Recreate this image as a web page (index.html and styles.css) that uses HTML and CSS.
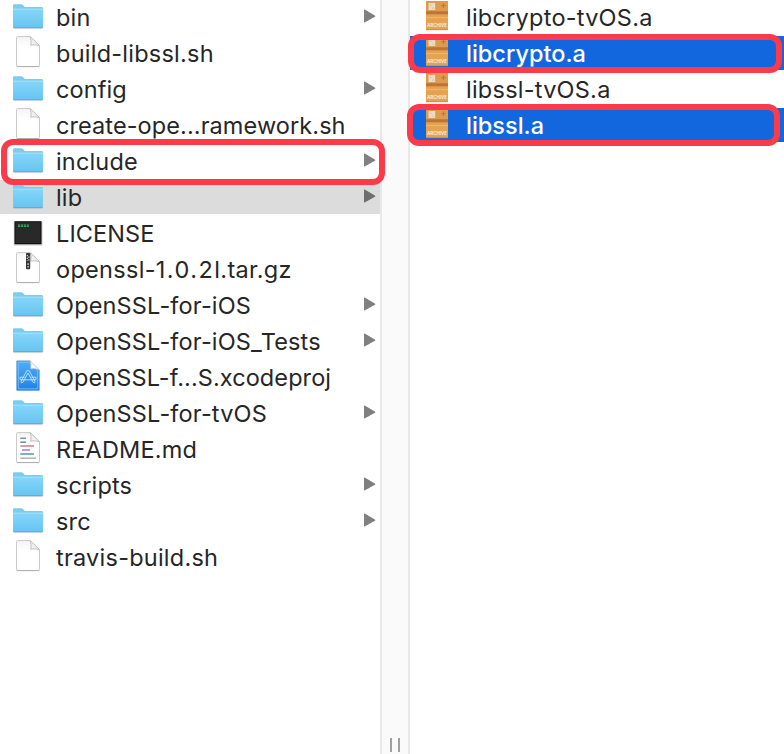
FILE: index.html
```
<!DOCTYPE html>
<html lang="en">
<head>
<meta charset="utf-8">
<title>Files</title>
<link rel="stylesheet" href="styles.css">
</head>
<body>
<svg class="defs" width="0" height="0">
  <defs>
    <linearGradient id="gf" x1="0" y1="0" x2="0" y2="1"><stop offset="0" stop-color="#84d5f9"/><stop offset="1" stop-color="#68c4f2"/></linearGradient>
    <linearGradient id="gx" x1="0" y1="0" x2="0" y2="1"><stop offset="0" stop-color="#50aef5"/><stop offset="1" stop-color="#1f80e8"/></linearGradient>
    <linearGradient id="gp" x1="0" y1="0" x2="0" y2="1"><stop offset="0" stop-color="#f4f4f4"/><stop offset=".35" stop-color="#fff"/></linearGradient>
    <symbol id="folder" viewBox="0 0 32 34">
      <path d="M1.5 28.6h29" stroke="#b9c4ca" stroke-width="1" opacity=".7"/>
      <path d="M1 27V5.5Q1 4.3 2.2 4.3H9.5Q10.4 4.3 11 5L12.8 7H29.8Q31 7 31 8.200V27Q31 28 30 28H2Q1 28 1 27Z" fill="#7bcdf0"/>
      <path d="M1.400 9.400H30.600V27.300H1.400Z" fill="url(#gf)"/>
      <path d="M1 9.200H31" stroke="#a9e3fa" stroke-width="1"/>
      <path d="M1.300 27.600H30.700" stroke="#5aa9cf" stroke-width=".9"/>
    </symbol>
    <symbol id="page" viewBox="0 0 32 34">
      <path d="M4.500 1.500Q4.500.6 5.500.6H18.300L27.500 9.800V29.600Q27.500 30.500 26.500 30.500H5.500Q4.500 30.500 4.500 29.600Z" fill="url(#gp)" stroke="#c4c4c4" stroke-width=".9"/>
      <path d="M4.800 30.600H27.200" stroke="#aaa" stroke-width=".9"/>
      <path d="M18.300.6Q19.600 4.500 18.800 9.200Q23.500 8 27.500 9.800Z" fill="#f1f1f1" stroke="#bbb" stroke-width=".9"/>
      <path d="M19.200 0H28V9Z" fill="#fff"/>
    </symbol>
    <symbol id="exec" viewBox="0 0 32 34">
      <rect x="1.700" y="5.500" width="28.800" height="24" rx="1" fill="#c9c9c9"/>
      <rect x="2.500" y="5.200" width="27" height="23" fill="#0e0e0e"/>
      <rect x="3.500" y="6.200" width="25" height="21" fill="#292929"/>
      <path d="M6 9.800H16.800" stroke="#3fae62" stroke-width="2.400" stroke-dasharray="2.200 .7"/>
      <path d="M6 9.700H16.800" stroke="#292929" stroke-width=".4"/>
    </symbol>
    <symbol id="zip" viewBox="0 0 32 34">
      <use href="#page" width="32" height="34"/>
      <rect x="14" y="1" width="4.200" height="16.200" rx="1" fill="#353535"/>
      <path d="M15.300 3V9M16.900 4.500V10" stroke="#eee" stroke-width="1.100" stroke-dasharray="1.300 1.500"/>
      <path d="M16.100 11.300V15.500" stroke="#ddd" stroke-width="1.300" stroke-dasharray="1.600 1"/>
    </symbol>
    <symbol id="xcode" viewBox="0 0 32 34">
      <path d="M4.800 30.300H27.200V10L18 .9H4.800Z" fill="url(#gx)" stroke="#3b86ca" stroke-width=".7"/>
      <path d="M6.300 28.800H25.700V11L17.500 2.300H6.300Z" fill="none" stroke="#8dcaff" stroke-width=".7"/>
      <path d="M18 .6Q19.500 4 18.600 8.800Q23 8 27.500 10Z" fill="#f7f7f7" stroke="#bbb" stroke-width=".5"/>
      <path d="M14.800 10.800H17.200L23 21.500L22.600 23L21.200 22.400L16 13L10.800 22.400L9.400 23L9 21.500ZM8 17.200H12.500M19.500 17.200H24V19.800H8V17.200" fill="none" stroke="#c8e7ff" stroke-width=".9"/>
    </symbol>
    <symbol id="doc" viewBox="0 0 32 34">
      <use href="#page" width="32" height="34"/>
      <g stroke-width="1.500"><path d="M8.300 6.300H14" stroke="#79969d"/><path d="M8.300 10.200H14" stroke="#4c9a98"/><path d="M8.300 14H22" stroke="#c77e83"/><path d="M10 18H18" stroke="#a57bdc"/><path d="M8.300 22H22" stroke="#4a9c9e"/><path d="M8.300 26.200H24" stroke="#b3b3b3"/></g>
    </symbol>
    <symbol id="archive" viewBox="0 0 32 34">
      <rect x="5" y="1" width="22" height="29" fill="#e5a352"/>
      <rect x="5" y="1" width="22" height="11" fill="#dc9b4d"/>
      <rect x="5" y="11.300" width="22" height="3" fill="#bd7434"/>
      <path d="M5 17.500H27" stroke="#edb86c" stroke-width="1"/>
      <rect x="7.500" y="3" width="6.700" height="7" fill="#ecdcc3"/>
      <path d="M8.500 5.300H10.500M11 8.200H13" stroke="#d3c6b0" stroke-width="1"/>
      <path d="M20 5.700H25M22.500 3.300V8.200" stroke="#b76b2d" stroke-width="1" opacity=".75"/>
      <path d="M5 29.700H27" stroke="#c78441" stroke-width=".8"/>
      <text class="tag" x="16" y="27.300" text-anchor="middle" textLength="20" lengthAdjust="spacingAndGlyphs">ARCHIVE</text>
    </symbol>
    <symbol id="arrow" viewBox="0 0 14 34"><path d="M1 9.800V22.200Q1 22.800 1.700 22.500L11.900 16.800Q12.800 16.100 11.900 15.400L1.700 9.400Q1 9.100 1 9.800Z" fill="currentColor"/></symbol>
  </defs>
</svg>
<main class="browser">
  <ul class="column left">
    <li class="row"><svg class="icon"><use href="#folder"/></svg><span class="name">bin</span><svg class="arrow"><use href="#arrow"/></svg></li>
    <li class="row"><svg class="icon"><use href="#page"/></svg><span class="name wide">build-libssl.sh</span></li>
    <li class="row"><svg class="icon"><use href="#folder"/></svg><span class="name snug">config</span><svg class="arrow"><use href="#arrow"/></svg></li>
    <li class="row"><svg class="icon"><use href="#page"/></svg><span class="name snug">create-ope...ramework.sh</span></li>
    <li class="row"><svg class="icon"><use href="#folder"/></svg><span class="name">include</span><svg class="arrow"><use href="#arrow"/></svg><i class="mark mark-include"></i></li>
    <li class="row current"><svg class="icon"><use href="#folder"/></svg><span class="name">lib</span><svg class="arrow"><use href="#arrow"/></svg></li>
    <li class="row"><svg class="icon"><use href="#exec"/></svg><span class="name snug">LICENSE</span></li>
    <li class="row"><svg class="icon"><use href="#zip"/></svg><span class="name tarball">openssl-<span class="version">1.0.2</span>l.tar.gz</span></li>
    <li class="row"><svg class="icon"><use href="#folder"/></svg><span class="name">OpenSSL-for-iOS</span><svg class="arrow"><use href="#arrow"/></svg></li>
    <li class="row"><svg class="icon"><use href="#folder"/></svg><span class="name">OpenSSL-for-iOS_Tests</span><svg class="arrow"><use href="#arrow"/></svg></li>
    <li class="row"><svg class="icon"><use href="#xcode"/></svg><span class="name snug">OpenSSL-f...S.xcodeproj</span></li>
    <li class="row"><svg class="icon"><use href="#folder"/></svg><span class="name">OpenSSL-for-tvOS</span><svg class="arrow"><use href="#arrow"/></svg></li>
    <li class="row"><svg class="icon"><use href="#doc"/></svg><span class="name">README.md</span></li>
    <li class="row"><svg class="icon"><use href="#folder"/></svg><span class="name">scripts</span><svg class="arrow"><use href="#arrow"/></svg></li>
    <li class="row"><svg class="icon"><use href="#folder"/></svg><span class="name">src</span><svg class="arrow"><use href="#arrow"/></svg></li>
    <li class="row"><svg class="icon"><use href="#page"/></svg><span class="name wide">travis-build.sh</span></li>
  </ul>
  <div class="divider"><span class="grip"></span></div>
  <ul class="column right">
    <li class="row"><svg class="icon"><use href="#archive"/></svg><span class="name wide">libcrypto-tvOS.a</span></li>
    <li class="row selected"><svg class="icon"><use href="#archive"/></svg><span class="name">libcrypto.a</span><i class="mark mark-crypto"></i></li>
    <li class="row"><svg class="icon"><use href="#archive"/></svg><span class="name wide">libssl-tvOS.a</span></li>
    <li class="row selected"><svg class="icon"><use href="#archive"/></svg><span class="name">libssl.a</span><i class="mark mark-ssl"></i></li>
  </ul>
</main>
</body>
</html>
```
FILE: styles.css
```
* { box-sizing: border-box; }
body { margin: 0; background: #fff; color: #262626; font-family: Inter, "Liberation Sans", sans-serif; font-size: 23.5px; }
.defs { display: block; height: 0; }
.browser { display: grid; grid-template-columns: 380px 30px 374px; height: 754px; overflow: hidden; }
.column { list-style: none; margin: 0; padding: 0; }
.row { position: relative; display: flex; align-items: center; height: 34px; margin-bottom: 2px; padding: 0 3px 0 12px; }
.icon { width: 32px; height: 34px; flex: none; }
.right .icon { margin: 0 1px 0 -1px; }
.name { margin-left: 12px; flex: 1; padding-top: 2px; line-height: 34px; letter-spacing: .17px; white-space: nowrap; }
.name.snug { letter-spacing: .09px; }
.name.wide { letter-spacing: .24px; }
.name.tarball { letter-spacing: .3px; }
.version { letter-spacing: 1.5px; }
.arrow { width: 14px; height: 34px; flex: none; color: #808080; }
.current { background: #dcdcdc; }
.current .arrow { color: #6e6e6e; }
.selected { background: #1267df; color: #fff; }
.selected .name { font-weight: 500; letter-spacing: 0; }
.tag { font: 600 4.800px Inter, sans-serif; fill: #fff3dc; }
.divider { display: flex; justify-content: center; align-items: flex-end; background: #fafafa; border: solid #e8e8e8; border-width: 0 2px; padding-bottom: 2px; }
.grip { width: 10px; height: 14px; border: solid #a0a0a0; border-width: 0 2px; }
.mark { position: absolute; z-index: 1; border: 6px solid #fb3b49; border-radius: 12px; }
.mark-include { left: 1px; top: -5px; width: 384px; height: 46px; }
.mark-crypto { left: -2px; top: -2px; width: 374px; height: 39px; }
.mark-ssl { left: -3px; top: -4px; width: 373px; height: 42px; }
```
